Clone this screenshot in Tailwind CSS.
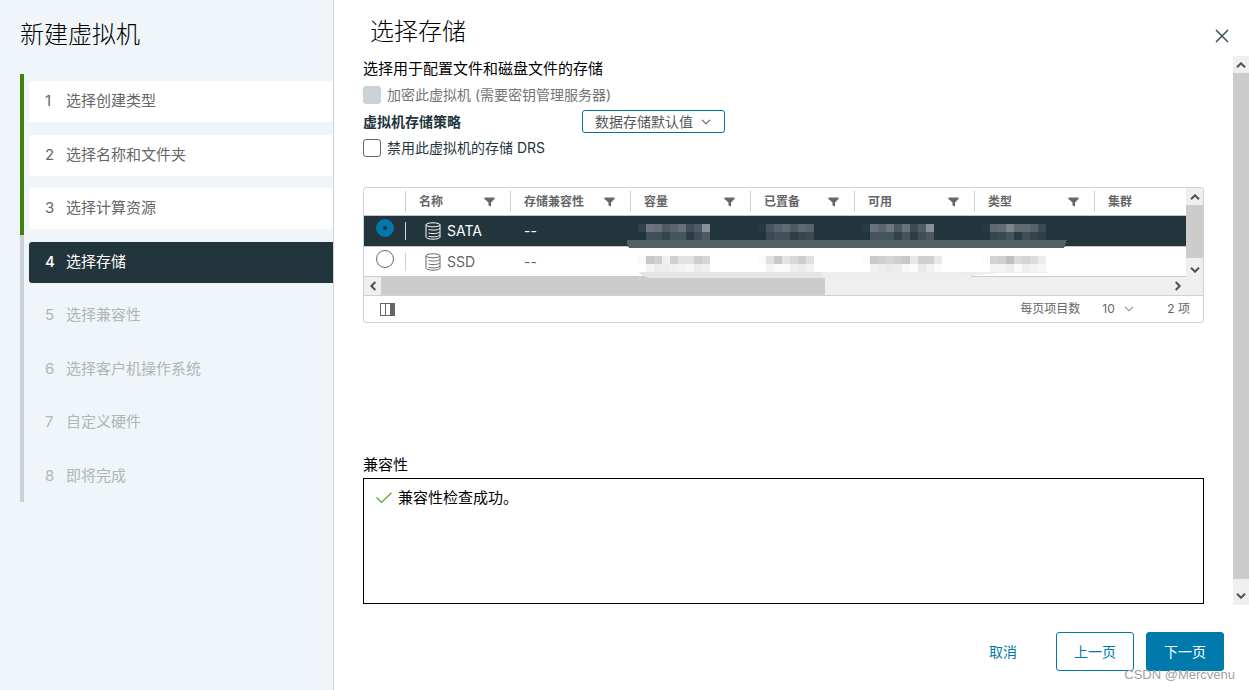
<!DOCTYPE html>
<html lang="zh-CN">
<head>
<meta charset="utf-8">
<title>新建虚拟机</title>
<script src="https://cdn.jsdelivr.net/npm/@tailwindcss/browser@4"></script>
</head>
<body class="bg-white text-[15px] text-black font-['Inter','Noto_Sans_CJK_SC',sans-serif]">
<svg class="hidden" aria-hidden="true">
  <symbol id="filter" viewBox="0 0 11 10"><path d="M.5.5h10v1.500L7 5.500V9.500L4.500 8.500v-3L.5 2z" fill="currentColor"/></symbol>
  <symbol id="db" viewBox="0 0 16 18"><g fill="none" stroke="currentColor" stroke-width="1"><ellipse cx="8" cy="2.800" rx="7" ry="2"/><path d="M1 2.800v12.200c0 1.200 3.100 2.200 7 2.200s7-1 7-2.200V2.800"/><path d="M3.500 7.500c2.800.8 6.500.8 9 .1 1-.3 1.700-.7 2.300-1.200M3.500 11c2.800.8 6.500.8 9 .1 1-.3 1.700-.7 2.300-1.200M3.500 14.300c2.800.8 6.500.8 9 .1 1-.3 1.700-.7 2.300-1.200"/></g></symbol>
  <symbol id="up" viewBox="0 0 10 6"><path d="M1 5.300L5 1.300L9 5.300" fill="none" stroke="#505050" stroke-width="2"/></symbol>
  <symbol id="down" viewBox="0 0 10 6"><path d="M1 .7L5 4.700L9 .7" fill="none" stroke="#505050" stroke-width="2"/></symbol>
  <symbol id="left" viewBox="0 0 6 10"><path d="M5.300 1L1.300 5L5.300 9" fill="none" stroke="#505050" stroke-width="2"/></symbol>
  <symbol id="right" viewBox="0 0 6 10"><path d="M.7 1L4.700 5L.7 9" fill="none" stroke="#505050" stroke-width="2"/></symbol>
  <symbol id="chevron" viewBox="0 0 10 6"><path d="M1 .8L5 4.800L9 .8" fill="none" stroke="currentColor" stroke-width="1.100"/></symbol>
</svg>
<div class="flex min-h-screen">
  <aside class="w-[334px] shrink-0 border-r border-[#c9d3d8] bg-[#eff5f8] pl-5">
    <h1 class="pt-[17px] text-2xl leading-9 font-light">新建虚拟机</h1>
    <ol class="mt-[21px] grid min-h-[428px] auto-rows-fr text-[#666666]">
      <li class="border-l-4 border-[#42810e] pt-[7px] pl-[5px]"><button class="flex h-[41px] w-full items-center rounded-[3px] bg-white pl-4 text-left"><span class="w-[21px]">1</span>选择创建类型</button></li>
      <li class="border-l-4 border-[#42810e] pt-[7px] pl-[5px]"><button class="flex h-[41px] w-full items-center rounded-[3px] bg-white pl-4 text-left"><span class="w-[21px]">2</span>选择名称和文件夹</button></li>
      <li class="border-l-4 border-[#42810e] pt-[7px] pl-[5px]"><button class="flex h-[41px] w-full items-center rounded-[3px] bg-white pl-4 text-left"><span class="w-[21px]">3</span>选择计算资源</button></li>
      <li class="border-l-4 border-[#c9d3d8] pt-[7px] pl-[5px]"><button aria-current="step" class="flex h-[41px] w-full items-center rounded-l-[3px] bg-[#22343c] pl-4 text-left text-white"><span class="w-[21px] font-medium">4</span>选择存储</button></li>
      <li class="border-l-4 border-[#c9d3d8] pt-[7px] pl-[5px]"><button disabled class="flex h-[41px] w-full items-center pl-4 text-left text-[#b0b5b8]"><span class="w-[21px]">5</span>选择兼容性</button></li>
      <li class="border-l-4 border-[#c9d3d8] pt-[7px] pl-[5px]"><button disabled class="flex h-[41px] w-full items-center pl-4 text-left text-[#b0b5b8]"><span class="w-[21px]">6</span>选择客户机操作系统</button></li>
      <li class="border-l-4 border-[#c9d3d8] pt-[7px] pl-[5px]"><button disabled class="flex h-[41px] w-full items-center pl-4 text-left text-[#b0b5b8]"><span class="w-[21px]">7</span>自定义硬件</button></li>
      <li class="border-l-4 border-[#c9d3d8] pt-[7px] pl-[5px]"><button disabled class="flex h-[41px] w-full items-center pl-4 text-left text-[#b0b5b8]"><span class="w-[21px]">8</span>即将完成</button></li>
    </ol>
  </aside>

  <main class="flex min-w-0 flex-1 flex-col">
    <header class="flex h-14 justify-between pr-5 pl-9">
      <h2 class="pt-[14px] text-2xl leading-9 font-light">选择存储</h2>
      <button aria-label="关闭" class="mt-[29px] size-[14px] text-[#3c5059]"><svg viewBox="0 0 14 14" class="size-[14px]"><path d="M1 1l12 12M13 1L1 13" stroke="currentColor" stroke-width="1.500"/></svg></button>
    </header>

    <div class="flex flex-1">
      <section class="min-w-0 flex-1 px-[29px]">
        <p class="h-[26px] leading-[26px]">选择用于配置文件和磁盘文件的存储</p>
        <label class="flex h-[26px] items-center gap-1.5 text-sm text-[#747474]"><input type="checkbox" disabled class="size-[18px] appearance-none rounded-[3px] bg-[#c9d3d8]">加密此虚拟机 (需要密钥管理服务器)</label>
        <div class="flex h-[27px] items-center text-sm">
          <label for="policy" class="w-[219px] font-bold text-[#22343c]">虚拟机存储策略</label>
          <span class="relative flex h-[23px] w-[143px] items-center">
            <select id="policy" class="h-full w-full appearance-none rounded-[3px] border border-[#0072a3] bg-white pl-3 text-sm leading-none text-[#565656]"><option>数据存储默认值</option></select>
            <svg class="pointer-events-none absolute right-[14px] h-[6px] w-[10px] text-[#565656]"><use href="#chevron"/></svg>
          </span>
        </div>
        <label class="flex h-[26px] items-center gap-1.5 text-sm text-[#22343c]"><input type="checkbox" class="size-[18px] appearance-none rounded-[3px] border border-[#666666] bg-white">禁用此虚拟机的存储 DRS</label>

        <div class="mt-[26px] overflow-hidden rounded-[3px] border border-[#c9d3d8] text-xs text-[#666666]">
          <div class="flex">
            <div class="relative min-w-0 flex-1">
              <table class="w-full table-fixed border-separate border-spacing-0">
                <colgroup><col class="w-[41px]"><col class="w-[105px]"><col class="w-[120px]"><col class="w-[120px]"><col class="w-[104px]"><col class="w-[120px]"><col class="w-[120px]"><col></colgroup>
                <thead>
                  <tr class="text-left">
                    <th class="h-7 border-b border-[#bfc6ca] p-0"></th>
                    <th class="border-b border-[#bfc6ca] p-0 font-bold"><div class="flex h-[21px] items-center justify-between border-l border-[#c9d3d8] pr-[15px] pl-[13px]">名称<svg class="h-[10px] w-[11px]"><use href="#filter"/></svg></div></th>
                    <th class="border-b border-[#bfc6ca] p-0 font-bold"><div class="flex h-[21px] items-center justify-between border-l border-[#c9d3d8] pr-[15px] pl-[13px]">存储兼容性<svg class="h-[10px] w-[11px]"><use href="#filter"/></svg></div></th>
                    <th class="border-b border-[#bfc6ca] p-0 font-bold"><div class="flex h-[21px] items-center justify-between border-l border-[#c9d3d8] pr-[15px] pl-[13px]">容量<svg class="h-[10px] w-[11px]"><use href="#filter"/></svg></div></th>
                    <th class="border-b border-[#bfc6ca] p-0 font-bold"><div class="flex h-[21px] items-center justify-between border-l border-[#c9d3d8] pr-[15px] pl-[13px]">已置备<svg class="h-[10px] w-[11px]"><use href="#filter"/></svg></div></th>
                    <th class="border-b border-[#bfc6ca] p-0 font-bold"><div class="flex h-[21px] items-center justify-between border-l border-[#c9d3d8] pr-[15px] pl-[13px]">可用<svg class="h-[10px] w-[11px]"><use href="#filter"/></svg></div></th>
                    <th class="border-b border-[#bfc6ca] p-0 font-bold"><div class="flex h-[21px] items-center justify-between border-l border-[#c9d3d8] pr-[15px] pl-[13px]">类型<svg class="h-[10px] w-[11px]"><use href="#filter"/></svg></div></th>
                    <th class="border-b border-[#bfc6ca] p-0 font-bold"><div class="flex h-[21px] items-center border-l border-[#c9d3d8] pl-[13px]">集群</div></th>
                  </tr>
                </thead>
                <tbody class="text-sm">
                  <tr class="bg-[#22343c] text-white">
                    <td class="h-[31px] border-b border-[#c4c8ca] p-0 pt-[3px] pl-3 align-top"><input type="radio" name="store" checked aria-label="SATA" class="block size-[18px] appearance-none rounded-full border-[7px] border-[#0077ad] bg-[#22343c]"></td>
                    <td class="border-b border-[#c4c8ca] p-0"><div class="flex h-[18px] items-center gap-1.5 border-l border-[#c9d3d8] pl-[19px]"><svg class="h-[18px] w-4 shrink-0"><use href="#db"/></svg>SATA</div></td>
                    <td class="border-b border-[#c4c8ca] p-0 pl-[14px]">--</td>
                    <td class="border-b border-[#c4c8ca] p-0"></td><td class="border-b border-[#c4c8ca] p-0"></td><td class="border-b border-[#c4c8ca] p-0"></td><td class="border-b border-[#c4c8ca] p-0"></td><td class="border-b border-[#c4c8ca] p-0"></td>
                  </tr>
                  <tr>
                    <td class="h-[30px] border-b border-[#cccccc] p-0 pt-[3px] pl-3 align-top"><input type="radio" name="store" aria-label="SSD" class="block size-[18px] appearance-none rounded-full border border-[#666666] bg-white"></td>
                    <td class="border-b border-[#cccccc] p-0"><div class="flex h-[18px] items-center gap-1.5 border-l border-[#c9d3d8] pl-[19px]"><svg class="h-[18px] w-4 shrink-0"><use href="#db"/></svg>SSD</div></td>
                    <td class="border-b border-[#cccccc] p-0 pl-[14px]">--</td>
                    <td class="border-b border-[#cccccc] p-0"></td><td class="border-b border-[#cccccc] p-0"></td><td class="border-b border-[#cccccc] p-0"></td><td class="border-b border-[#cccccc] p-0"></td><td class="border-b border-[#cccccc] p-0"></td>
                  </tr>
                </tbody>
              </table>
              <div class="flex h-[18px] items-center bg-[#efefef]">
                <span class="flex h-full w-[17px] items-center justify-center"><svg class="h-[10px] w-[6px]"><use href="#left"/></svg></span>
                <span class="h-full w-[54%] bg-[#cccccc]"></span>
                <span class="ml-auto pr-[5px]"><svg class="h-[10px] w-[6px]"><use href="#right"/></svg></span>
              </div>
              <!-- Pixelated masks over the private values -->
              <svg id="mask" aria-hidden="true" class="pointer-events-none absolute top-0 left-0 h-[92px] w-[822px]" viewBox="364 188 822 92" shape-rendering="crispEdges">
                <path d="M627 240H1067L1064 248H629L627 244z" fill="#536167"/>
                <path d="M638 272H822V278H649L641 275z" fill="#e4e4e4"/>
                <path d="M822 272H1048V273H998L980 275L962 278H822z" fill="#ededed"/>
              </svg>
            </div>
            <div class="flex w-[17px] flex-col items-center bg-[#efefef] pb-[18px]">
              <span class="flex h-[17px] items-center"><svg class="h-[6px] w-[10px]"><use href="#up"/></svg></span>
              <span class="w-full flex-1 bg-[#cccccc]"></span>
              <span class="flex h-[19px] pt-[9px]"><svg class="h-[6px] w-[10px]"><use href="#down"/></svg></span>
            </div>
          </div>
          <div class="flex h-[27px] items-center border-t border-[#c9d3d8] pr-[13px] pl-4">
            <button aria-label="显示列"><svg viewBox="0 0 15 13" class="h-[13px] w-[15px]" shape-rendering="crispEdges"><path d="M.5.5h14v12H.5zM5.500.5v12" fill="none" stroke="#666666"/><path d="M10 0h5v13h-5z" fill="#666666"/></svg></button>
            <label for="size" class="ml-auto">每页项目数</label>
            <span class="relative ml-[22px] flex w-8 items-center">
              <select id="size" class="w-full appearance-none bg-transparent text-xs"><option>10</option></select>
              <svg class="pointer-events-none absolute right-0 h-[6px] w-[10px] text-[#8c8c8c]"><use href="#chevron"/></svg>
            </span>
            <span class="ml-[33px]">2 项</span>
          </div>
        </div>

        <h3 class="mt-[129px] h-[26px] leading-[26px]">兼容性</h3>
        <div class="h-[126px] border border-black">
          <p class="flex h-[38px] items-center gap-1.5 pl-3"><svg viewBox="0 0 16 12" class="h-3 w-4"><path d="M.5 5.500L5.500 10.500L15.500.8" fill="none" stroke="#5aa220" stroke-width="1.200"/></svg>兼容性检查成功。</p>
        </div>
      </section>
      <div class="flex w-4 shrink-0 flex-col items-center bg-[#efefef]">
        <span class="flex h-[17px] items-center"><svg class="h-[6px] w-[10px]"><use href="#up"/></svg></span>
        <span class="w-full flex-1 bg-[#cccccc]"></span>
        <span class="flex h-[26px] items-center pt-2"><svg class="h-[6px] w-[10px]"><use href="#down"/></svg></span>
      </div>
    </div>

    <footer class="relative flex h-[85px] items-center justify-end gap-3 pt-2 pr-[25px] text-sm">
      <button class="h-[39px] px-[27px] text-[#0079ad]">取消</button>
      <button class="h-[39px] rounded-[3px] border border-[#0079ad] px-[17px] text-[#0079ad]">上一页</button>
      <button class="h-[39px] rounded-[3px] border border-[#0079ad] bg-[#0079ad] px-[17px] text-white">下一页</button>
      <span class="pointer-events-none absolute right-[14px] bottom-[5px] font-['Liberation_Sans',sans-serif] text-[13px] text-[#a0a0a0] [text-shadow:1px_1px_0_#ffffff99]">CSDN @Mercvenu</span>
    </footer>
  </main>
</div>
<script>
  // Each strip: start x, top y, then one colour per 8px block
  const strips = [
    [638,224,'2f414a 6f7580 6a7079 4d5b64 5a666d 6a7079 3f4e57 4d5b64 899096'],
    [646,232,'3f4f56 3f4f56 34444c 46545b 46545b 2c3c45 3d4d55 4d5b62'],
    [758,224,'273942 46565f 56636a 5f6b71 4d5b62 5f6b70 57656b'],
    [766,232,'3a4a52 43525a 43525a 2c3d46 35464f 3a4b53'],
    [862,224,'283a43 6a7079 5b6770 6f757d 4b5962 6b7179 3c4b54 515e66 8a9095'],
    [870,232,'46545b 46545b 46545b 334149 45535a 2d3b44 3f4f57 4a5960'],
    [982,224,'273a43 5b6970 616d73 7c8686 606d70 606d70 56646a 3b4b53'],
    [990,232,'34454e 394a51 46555b 2a3a44 3f4e55 34444c 2d3e47'],
    [638,256,'f9f9f9 c8c8c8 d0d0d0 f0f0f0 d0d0d0 e2e2e2 e2e2e2 cdcdcd d6d6d6'],
    [646,264,'f3f3f3 ebebeb ededed f0f0f0 f2f2f2 f5f5f5 ebebeb f0f0f0'],
    [758,256,'fafafa e0e0e0 c8c8c8 e3e3e3 d8d8d8 cdcdcd e0e0e0'],
    [766,264,'f3f3f3 fafafa fafafa eeeeee ebebeb f2f2f2'],
    [862,256,'fbfbfb cacaca cfcfcf d6d6d6 cfcfcf c8c8c8 e8e8e8 cfcfcf cfcfcf e8e8e8'],
    [870,264,'f0f0f0 ededed eaeaea ececec f8f8f8 fbfbfb e9e9e9 f2f2f2 fafafa'],
    [982,256,'fcfcfc d3d3d3 d0d0d0 c0c0c0 dadada d3d3d3 dcdcdc ececec'],
    [990,264,'f3f3f3 f3f3f3 ededed fafafa eeeeee f2f2f2 f7f7f7']
  ];
  const mask = document.getElementById('mask');
  for (const [x, y, colours] of strips) {
    colours.split(' ').forEach((c, i) => {
      const r = document.createElementNS('http://www.w3.org/2000/svg', 'rect');
      r.setAttribute('x', x + i * 8);
      r.setAttribute('y', y);
      r.setAttribute('width', 8);
      r.setAttribute('height', 8);
      r.setAttribute('fill', '#' + c);
      mask.append(r);
    });
  }
</script>
</body>
</html>
